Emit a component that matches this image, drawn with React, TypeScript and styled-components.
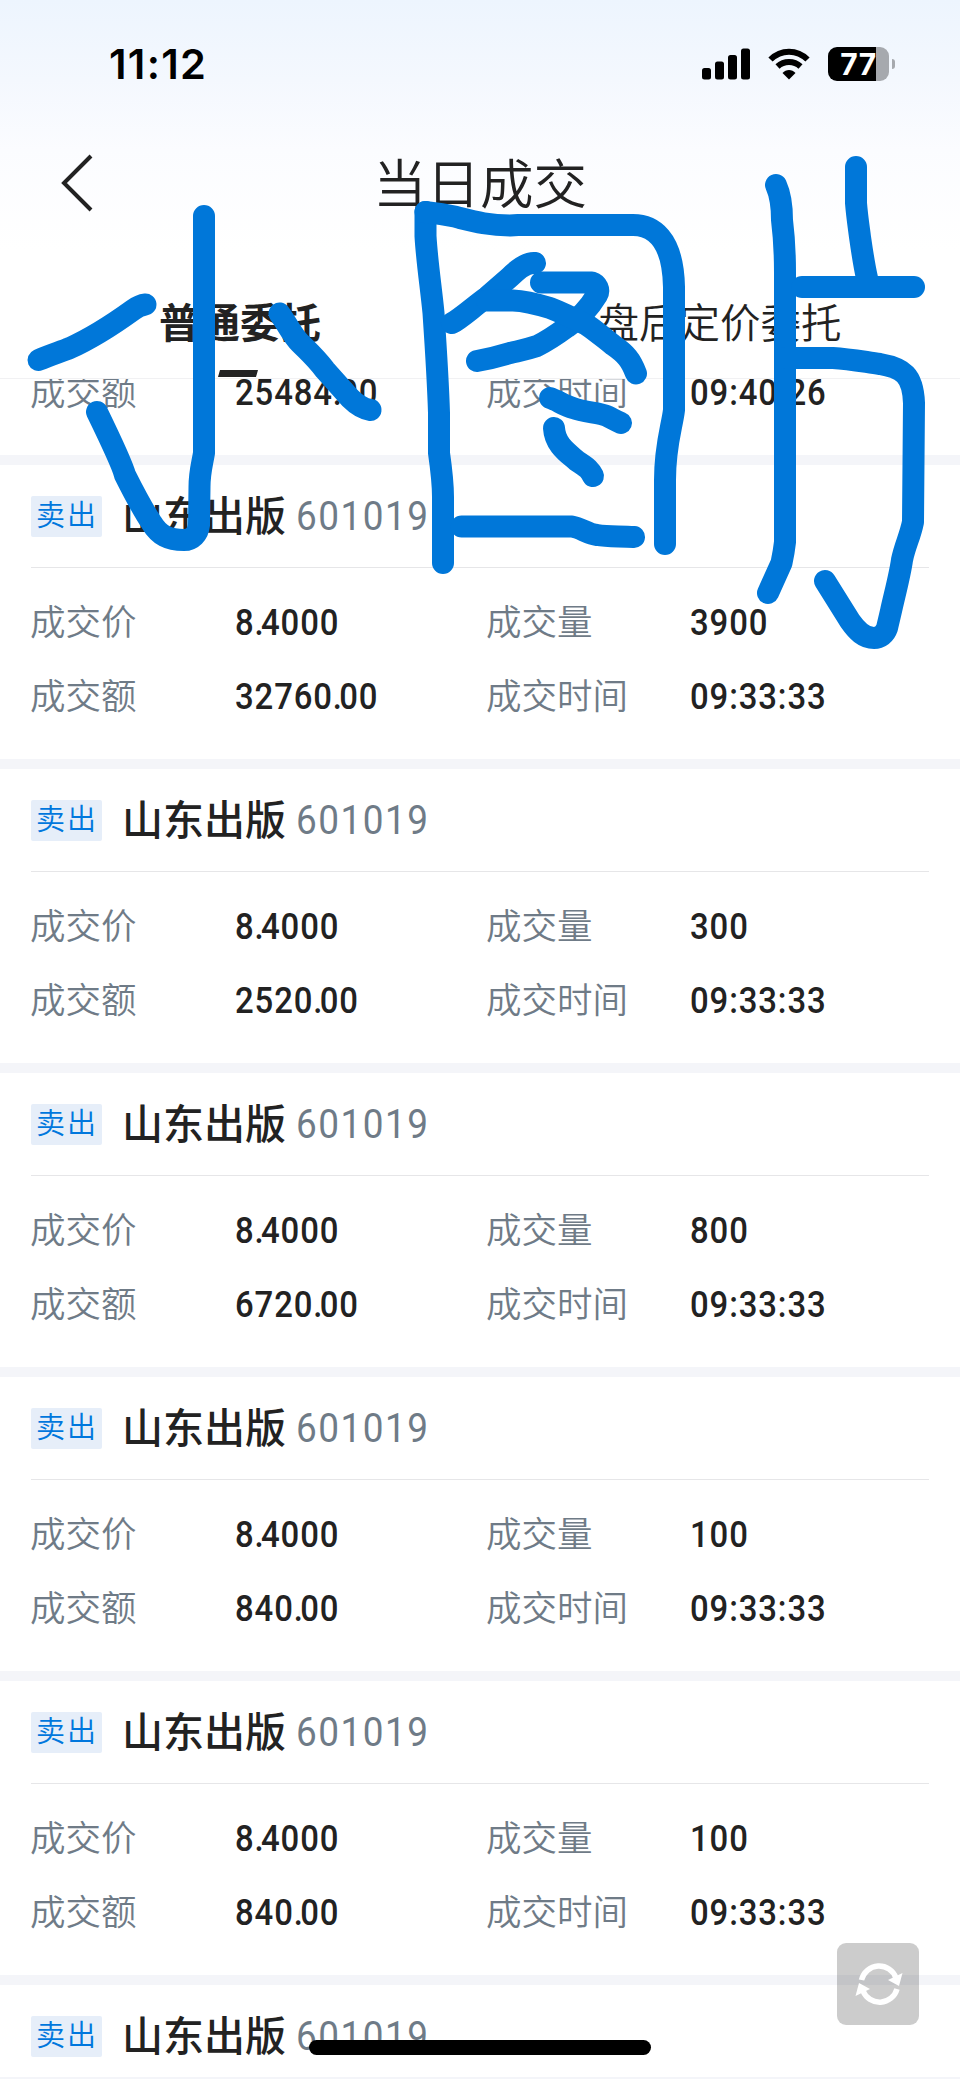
import React from "react"
import styled, { createGlobalStyle } from "styled-components"

interface Deal {
  price: string
  volume: string
  amount: string
  time: string
}

const deals: Deal[] = [
  { price: "8.4000", volume: "3900", amount: "32760.00", time: "09:33:33" },
  { price: "8.4000", volume: "300", amount: "2520.00", time: "09:33:33" },
  { price: "8.4000", volume: "800", amount: "6720.00", time: "09:33:33" },
  { price: "8.4000", volume: "100", amount: "840.00", time: "09:33:33" },
  { price: "8.4000", volume: "100", amount: "840.00", time: "09:33:33" },
]

const GlobalStyle = createGlobalStyle`
  * {
    box-sizing: border-box;
  }

  body {
    margin: 0;
    background: #fff;
    font-family: "Noto Sans CJK SC", sans-serif;
    color: #222;
  }
`

const Screen = styled.div`
  position: relative;
  width: 960px;
  height: 2079px;
  overflow: hidden;
  display: flex;
  flex-direction: column;
  background: #fff;
`

const Header = styled.header`
  height: 379px;
  flex: none;
  background: linear-gradient(180deg, #edf5fe 0, #f4f8fe 80px, #fbfcff 150px, #fff 250px);
  border-bottom: 1px solid #f1f1f3;
`

const StatusBar = styled.div`
  height: 128px;
  display: flex;
  align-items: center;
  justify-content: space-between;
  padding: 0 65px 0 109px;
`

const Clock = styled.div`
  font-family: Inter, sans-serif;
  font-size: 41.5px;
  font-weight: 600;
  letter-spacing: 1.3px;
  line-height: 50px;
  color: #000;
`

const StatusIcons = styled.div`
  display: flex;
  align-items: center;
`

const SignalIcon = styled.svg`
  width: 48px;
  height: 32px;
  margin-right: 18px;
`

const WifiIcon = styled.svg`
  width: 42px;
  height: 32px;
  margin-right: 18px;
`

const Battery = styled.div`
  width: 61px;
  height: 34px;
  border-radius: 9px;
  background: linear-gradient(90deg, #000 48px, #a6a9ae 48px);
  display: flex;
  align-items: center;
  justify-content: center;
  font-family: Inter, sans-serif;
  font-size: 30px;
  font-weight: 700;
  letter-spacing: 0.5px;
  color: #fff;
`

const BatteryTip = styled.div`
  width: 3px;
  height: 10px;
  margin-left: 3px;
  border-radius: 0 4px 4px 0;
  background: #a6a9ae;
`

const NavBar = styled.div`
  height: 112px;
  display: grid;
  grid-template-columns: 200px 1fr 200px;
  align-items: center;
`

const BackButton = styled.button`
  width: 40px;
  height: 60px;
  margin-left: 58px;
  padding: 0;
  border: none;
  background: none;
  color: #222;
`

const Title = styled.h1`
  margin: 0;
  padding-bottom: 7px;
  text-align: center;
  font-size: 53.5px;
  font-weight: 350;
  line-height: 60px;
  white-space: nowrap;
`

const Tabs = styled.div`
  display: grid;
  grid-template-columns: 1fr 1fr;
  height: 138px;
`

const Tab = styled.div<{ $active?: boolean }>`
  display: flex;
  flex-direction: column;
  align-items: center;
  padding-top: 51px;
  font-size: 40.5px;
  line-height: 60px;
  font-weight: ${(props) => (props.$active ? 700 : 350)};
`

const TabMark = styled.div`
  width: 38px;
  height: 7px;
  margin: 19px 5px 0 0;
  background: #222;
  transform: skewX(-16deg);
`

const Card = styled.section<{ $clipped?: boolean }>`
  flex: none;
  height: ${(props) => (props.$clipped ? "86px" : "304px")};
  padding: 0 31px 26px;
  overflow: hidden;
  display: flex;
  flex-direction: column;
  justify-content: ${(props) => (props.$clipped ? "flex-end" : "space-between")};
  border-bottom: 10px solid #f4f5f9;
`

const CardHead = styled.div`
  height: 103px;
  flex: none;
  display: flex;
  align-items: center;
  border-bottom: 1px solid #e6e6e8;
`

const Tag = styled.span`
  width: 71px;
  height: 41px;
  border-radius: 2px;
  background: #e6eef9;
  color: #0077dd;
  font-size: 29px;
  font-weight: 350;
  line-height: 35px;
  letter-spacing: 2px;
  padding-left: 5px;
`

const StockName = styled.span`
  margin-left: 20px;
  padding-bottom: 7px;
  font-size: 41px;
  font-weight: 500;
  line-height: 60px;
`

const Digits = styled.span`
  display: inline-block;
  font-family: Roboto, sans-serif;
  transform-origin: left center;
`

const StockCode = styled(Digits)`
  margin-left: 10px;
  font-size: 41px;
  font-weight: 400;
  letter-spacing: 1.7px;
  color: #6f7b87;
  transform: scaleX(0.9);
`

const FieldRow = styled.div`
  height: 74px;
  flex: none;
  display: grid;
  grid-template-columns: 204px 252px 203px 1fr;
  align-items: center;
`

const FieldLabel = styled.span`
  margin-left: -1px;
  padding-bottom: 4px;
  font-size: 35.5px;
  font-weight: 350;
  line-height: 50px;
  color: #6f7b87;
  white-space: nowrap;
`

const FieldValue = styled(Digits)`
  padding-top: 2px;
  font-size: 36.5px;
  font-weight: 500;
  line-height: 50px;
  letter-spacing: 1px;
  transform: scaleX(0.9);
`

const Point = styled.span`
  margin-right: -4px;
`

const RefreshButton = styled.button`
  position: absolute;
  left: 837px;
  top: 1943px;
  width: 82px;
  height: 82px;
  padding: 0;
  border: none;
  border-radius: 9px;
  background: rgba(0, 0, 0, 0.2);
`

const HomeIndicator = styled.div`
  position: absolute;
  left: 309px;
  top: 2040px;
  width: 342px;
  height: 15px;
  border-radius: 8px;
  background: #000;
`

const BottomEdge = styled.div`
  height: 2px;
  margin-top: auto;
  background: #f4f5f9;
`

const LastCard = styled.section`
  height: 92px;
  flex: none;
  padding: 0 31px;
  overflow: hidden;
`

const Ink = styled.svg`
  position: absolute;
  left: 0;
  top: 0;
  width: 960px;
  height: 700px;
  pointer-events: none;
`

const inkStrokes = [
  // left mark
  "M204 216V453C202 465 199.500 472 199.500 487L199 525C198 534 192 540 184 540C168 540 159 535 151.700 523C141 507 133 491 125 475C123 467 115 449 97 412",
  "M38.500 360C50 355 60 352 70 348C92 338 115 323 133 310C137 307 141 305 145.500 304.500",
  "M279.500 313.500C288 325 292 335 300 343C309 352 315 357 325 370L350 398C357 405 363 409 370.500 410",
  // middle mark
  "M425.500 212V236C427 262 431 287 433.500 313C436 350 438 380 439 413V453C441 467 443 482 443 497V563",
  "M425.500 212C440 214 450 215 460 218C476 222 490 225.500 510 225.500L518 225H633C652 225 673 237 674 287V410C672 427 665 445 665 480V544",
  "M452 323C460 319 472 308 487 297L510 277C516 271 526 262 535 263",
  "M541 282.500H592C597 284 600 290 597 295C586 313 576 321 567 327C552 338 545 342 537 346C525 350 518 351 510 353C497 357 488 359 477 361",
  "M487 300.500H513C526 301 540 305 550 308C563 313 575 319 587 325C596 331 604 338 613 345C626 354 631 360 636 373.500",
  "M550 398C557 400 564 406 573 408C584 412 600 413 607 416C613 419 616 421 621 423",
  "M554 428C555 445 568 453 577 461C588 468 590 470 593 476",
  "M461.500 526.500H572C581 528 588 534 597 535C608 537 620 536 634 537",
  // right mark
  "M776 185C781 196 782 209 782 220C784 236 785 255 785 273V542C784 551 783 556 781.500 563L768 593",
  "M856 167V203C857 216 859 229 860 237C862 251 864 265 867 278",
  "M802 287H914",
  "M785 358H833C850 359 865 362 880 364C903 368 913 375 914 403L913 522C910 537 905 545 902 560C900 575 894 597 891 611L887 628C885 634 880 638 874 638C864 638 857 631 850 621L825 581",
]

const CardTitle: React.FC = () => (
  <CardHead>
    <Tag>卖出</Tag>
    <StockName>山东出版</StockName>
    <StockCode>601019</StockCode>
  </CardHead>
)

const Amount: React.FC<{ value: string }> = ({ value }) => {
  const [whole, fraction] = value.split(".")
  return (
    <FieldValue>
      {whole}
      <Point>.</Point>
      {fraction}
    </FieldValue>
  )
}

const AmountRow: React.FC<Pick<Deal, "amount" | "time">> = ({ amount, time }) => (
  <FieldRow>
    <FieldLabel>成交额</FieldLabel>
    <Amount value={amount} />
    <FieldLabel>成交时间</FieldLabel>
    <FieldValue>{time}</FieldValue>
  </FieldRow>
)

const DealCard: React.FC<{ deal: Deal }> = ({ deal }) => (
  <Card>
    <CardTitle />
    <div>
      <FieldRow>
        <FieldLabel>成交价</FieldLabel>
        <Amount value={deal.price} />
        <FieldLabel>成交量</FieldLabel>
        <FieldValue>{deal.volume}</FieldValue>
      </FieldRow>
      <AmountRow amount={deal.amount} time={deal.time} />
    </div>
  </Card>
)

export default function App() {
  return (
    <>
      <GlobalStyle />
      <Screen>
        <Header>
          <StatusBar>
            <Clock>11:12</Clock>
            <StatusIcons>
              <SignalIcon viewBox="0 0 48 32">
                <rect x="0" y="20" width="9" height="11.500" rx="2.500" />
                <rect x="13" y="13.500" width="9" height="18" rx="2.500" />
                <rect x="26" y="7" width="9" height="24.500" rx="2.500" />
                <rect x="39" y="0.500" width="9" height="31" rx="2.500" />
              </SignalIcon>
              <WifiIcon viewBox="0 0 42 32" fill="none" stroke="#000" strokeWidth="6">
                <path d="M2.500 11.500C13 1 29 1 39.500 11.500" />
                <path d="M9.500 18.500C16 12.500 26 12.500 32.500 18.500" />
                <path d="M21 31.500L14.500 25C18 21 24 21 27.500 25Z" fill="#000" stroke="none" />
              </WifiIcon>
              <Battery>77</Battery>
              <BatteryTip />
            </StatusIcons>
          </StatusBar>
          <NavBar>
            <BackButton aria-label="返回">
              <svg width="40" height="60" viewBox="0 0 40 60" fill="none" stroke="currentColor" strokeWidth="4">
                <path d="M33 2L6 29L33 56" />
              </svg>
            </BackButton>
            <Title>当日成交</Title>
          </NavBar>
          <Tabs>
            <Tab $active>
              普通委托
              <TabMark />
            </Tab>
            <Tab>盘后定价委托</Tab>
          </Tabs>
        </Header>

        <Card $clipped>
          <AmountRow amount="25484.00" time="09:40:26" />
        </Card>
        {deals.map((deal, i) => (
          <DealCard key={i} deal={deal} />
        ))}
        <LastCard>
          <CardTitle />
        </LastCard>
        <BottomEdge />

        <RefreshButton aria-label="刷新">
          <svg width="82" height="82" viewBox="0 0 82 82" fill="none" stroke="#fff" strokeWidth="5.500">
            <path d="M24.500 37A18 18 0 0 1 59 35" />
            <path d="M60 46A18 18 0 0 1 26 48" />
            <path d="M51 37L65.500 30L62 43Z" fill="#fff" stroke="none" />
            <path d="M33 46L18.500 53L22 40Z" fill="#fff" stroke="none" />
          </svg>
        </RefreshButton>
        <HomeIndicator />
        <Ink viewBox="0 0 960 700" fill="none" stroke="#0077d9" strokeWidth="22" strokeLinecap="round" strokeLinejoin="round">
          {inkStrokes.map((d, i) => (
            <path key={i} d={d} />
          ))}
        </Ink>
      </Screen>
    </>
  )
}
